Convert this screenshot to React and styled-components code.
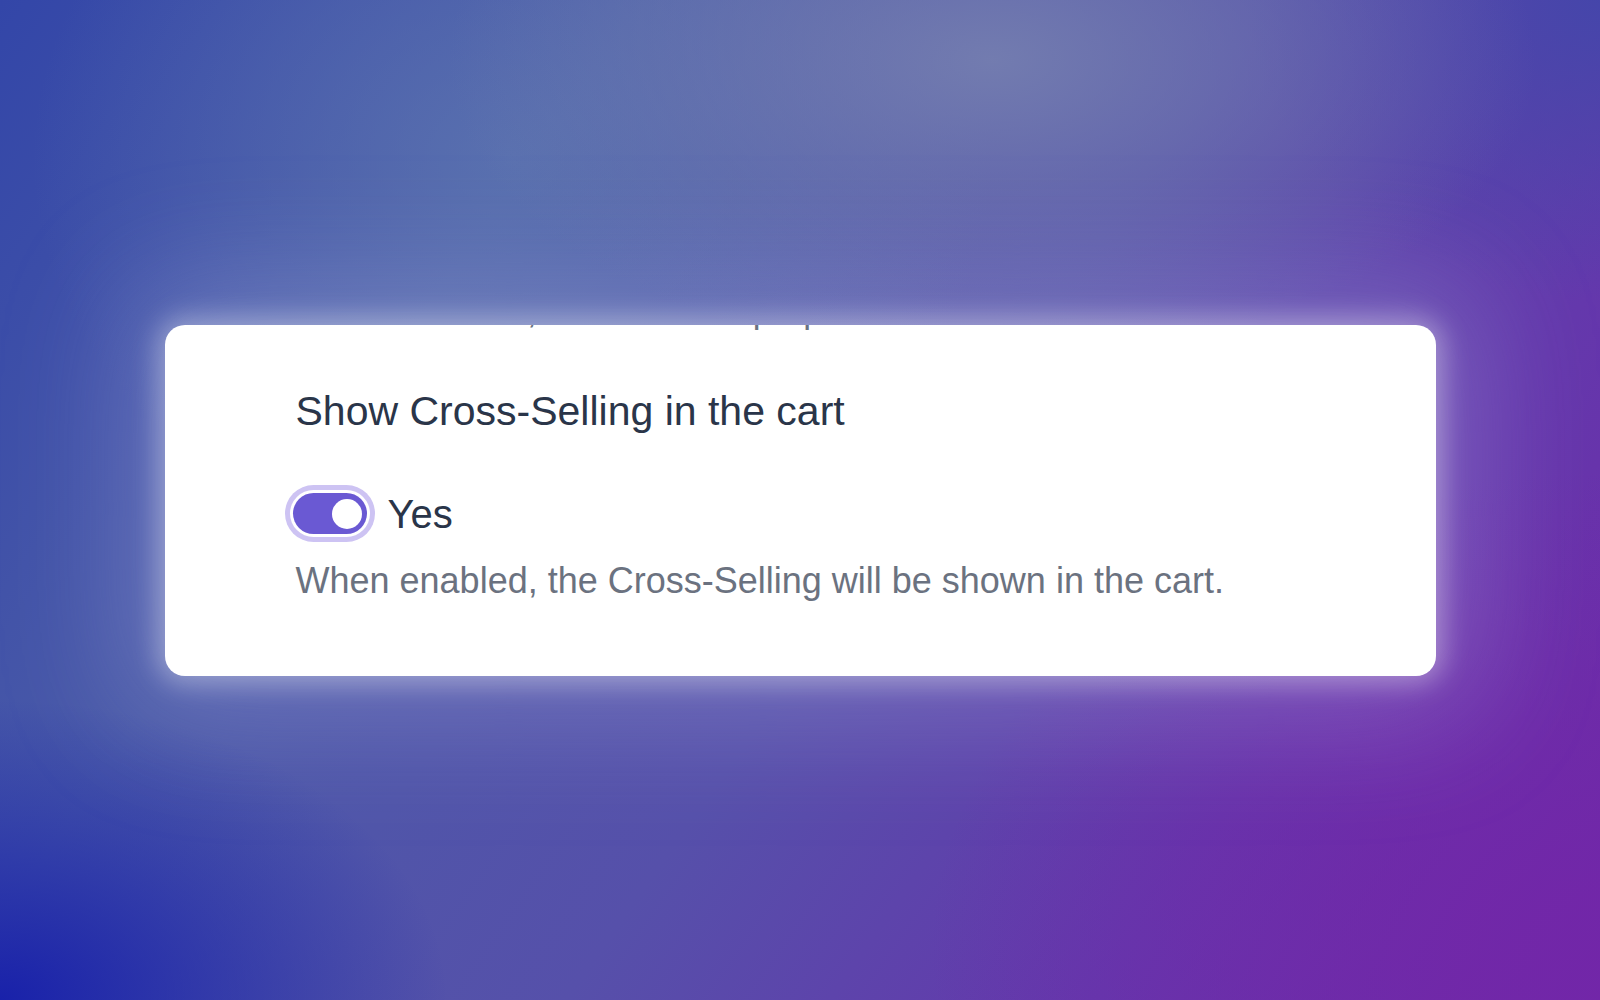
import React, { useState } from "react";
import styled, { createGlobalStyle } from "styled-components";

const GlobalStyle = createGlobalStyle`
  html, body {
    margin: 0;
    padding: 0;
    height: 100%;
  }
  body {
    font-family: "Liberation Sans", Arial, Helvetica, sans-serif;
  }
  #root {
    height: 100%;
  }
`;

const Page = styled.div`
  width: 100%;
  height: 100vh;
  display: flex;
  align-items: center;
  justify-content: center;
  overflow: hidden;
  background:
    radial-gradient(ellipse 34% 30% at 62% 6%, rgba(118, 128, 176, 0.9), rgba(118, 128, 176, 0) 100%),
    radial-gradient(ellipse 30% 40% at 32% 16%, rgba(96, 122, 178, 0.7), rgba(96, 122, 178, 0) 100%),
    radial-gradient(ellipse 22% 30% at 100% 0%, rgba(68, 70, 170, 0.95), rgba(68, 70, 170, 0) 100%),
    radial-gradient(ellipse 28% 30% at 0% 100%, rgba(22, 30, 170, 0.95), rgba(22, 30, 170, 0) 100%),
    radial-gradient(ellipse 42% 48% at 100% 95%, rgba(114, 38, 168, 0.9), rgba(114, 38, 168, 0) 100%),
    linear-gradient(125deg, #3346a8 0%, #4a5aa8 28%, #5650aa 55%, #6438ac 78%, #7028a8 100%);
`;

const Card = styled.section`
  width: 1271px;
  height: 351px;
  box-sizing: border-box;
  padding: 0 0 0 131px;
  background: #ffffff;
  border-radius: 20px;
  overflow: hidden;
  display: flex;
  flex-direction: column;
  box-shadow:
    0 0 26px 8px rgba(255, 255, 255, 0.35),
    0 0 120px 44px rgba(190, 190, 235, 0.28);
`;

const ClippedLine = styled.p`
  margin: -34px 0 0;
  font-size: 35px;
  line-height: 40px;
  color: #6b7280;
  white-space: nowrap;
`;

const Title = styled.h3`
  margin: 56px 0 0;
  font-size: 41px;
  line-height: 48px;
  font-weight: 400;
  color: #2a3549;
  white-space: nowrap;
`;

const SwitchRow = styled.label`
  margin: 57px 0 0 -3px;
  display: flex;
  align-items: center;
  gap: 21px;
  cursor: pointer;
`;

const Track = styled.button`
  width: 74px;
  height: 41px;
  padding: 0 5px;
  border: none;
  border-radius: 21px;
  display: flex;
  align-items: center;
  justify-content: ${(p) => (p.$on ? "flex-end" : "flex-start")};
  background: ${(p) => (p.$on ? "#6a59d3" : "#d1d5db")};
  box-shadow: 0 0 0 3px #ffffff, 0 0 0 8px #cdc3f3;
  cursor: pointer;
  flex-shrink: 0;
`;

const Knob = styled.span`
  width: 30px;
  height: 30px;
  border-radius: 50%;
  background: #ffffff;
`;

const SwitchText = styled.span`
  font-size: 40px;
  line-height: 44px;
  color: #2a3549;
`;

const Hint = styled.p`
  margin: 24px 0 0;
  font-size: 36px;
  line-height: 42px;
  color: #6b7280;
  white-space: nowrap;
`;

export default function App() {
  const [on, setOn] = useState(true);
  return (
    <>
      <GlobalStyle />
      <Page>
        <Card>
          <ClippedLine>
            Set the articles, which will be proposed to the customer.
          </ClippedLine>
          <Title>Show Cross-Selling in the cart</Title>
          <SwitchRow>
            <Track
              type="button"
              role="switch"
              aria-checked={on}
              $on={on}
              onClick={() => setOn(!on)}
            >
              <Knob />
            </Track>
            <SwitchText>{on ? "Yes" : "No"}</SwitchText>
          </SwitchRow>
          <Hint>When enabled, the Cross-Selling will be shown in the cart.</Hint>
        </Card>
      </Page>
    </>
  );
}
